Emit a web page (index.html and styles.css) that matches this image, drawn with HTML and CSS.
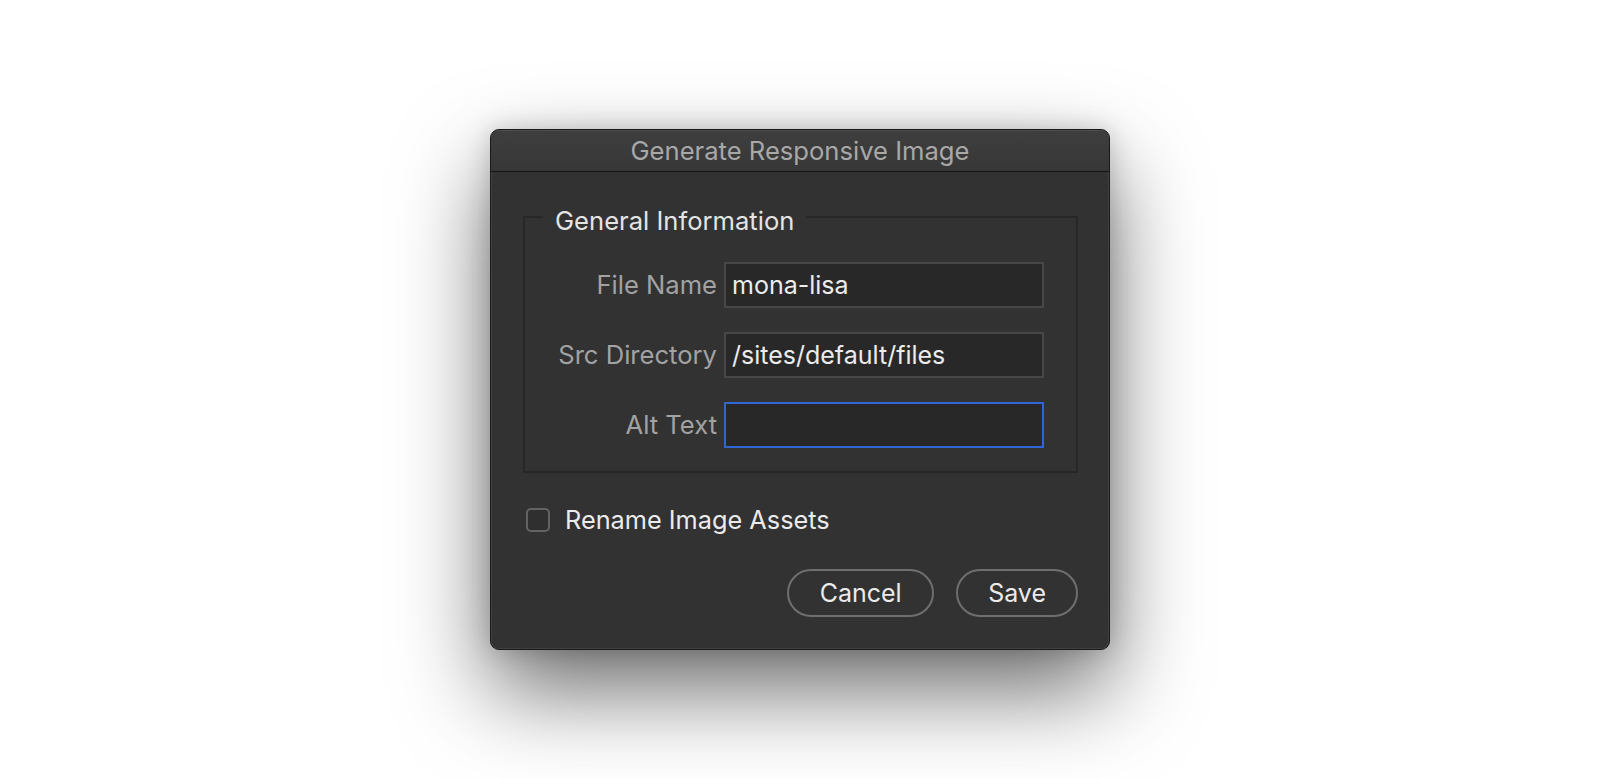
FILE: index.html
```html
<!DOCTYPE html>
<html lang="en">
<head>
<meta charset="utf-8">
<title>Generate Responsive Image</title>
<link rel="stylesheet" href="styles.css">
</head>
<body>
<div class="stage">
  <div class="dialog">
    <div class="titlebar">Generate Responsive Image</div>
    <div class="content">
      <fieldset class="group">
        <legend class="group-title">General Information</legend>
        <div class="rows">
          <label class="field-label" for="f-name">File Name</label>
          <input class="field-input" id="f-name" type="text" value="mona-lisa">
          <label class="field-label" for="f-src">Src Directory</label>
          <input class="field-input" id="f-src" type="text" value="/sites/default/files">
          <label class="field-label" for="f-alt">Alt Text</label>
          <input class="field-input is-focused" id="f-alt" type="text" value="">
        </div>
      </fieldset>
      <label class="check">
        <span class="check-box"></span>
        <span class="check-label">Rename Image Assets</span>
      </label>
      <div class="actions">
        <button class="btn btn-cancel" type="button">Cancel</button>
        <button class="btn btn-save" type="button">Save</button>
      </div>
    </div>
  </div>
</div>
</body>
</html>
```

FILE: styles.css
```css
html, body {
  margin: 0;
  padding: 0;
  background: #ffffff;
}

body {
  font-family: "Inter", "Noto Sans", "Liberation Sans", sans-serif;
  font-size: 25px;
  color: #e8e8e8;
}

.stage {
  height: 100vh;
  display: flex;
  align-items: center;
  justify-content: center;
}

.dialog {
  box-sizing: border-box;
  width: 620px;
  background: #323232;
  border: 1px solid #1a1a1a;
  border-radius: 9px;
  overflow: hidden;
  box-shadow:
    inset 0 0 0 1px rgba(255, 255, 255, 0.07),
    0 40px 90px rgba(0, 0, 0, 0.58),
    0 0 24px rgba(0, 0, 0, 0.18);
}

.titlebar {
  height: 41px;
  line-height: 41px;
  font-size: 25.6px;
  text-align: center;
  color: #a8a8a8;
  background: linear-gradient(#3e3e3e, #373737);
  border-bottom: 1px solid #141414;
  box-shadow: inset 0 1px 0 rgba(255, 255, 255, 0.08);
}

.content {
  padding: 29px 31px 32px 32px;
  display: flex;
  flex-direction: column;
}

.group {
  margin: 0;
  padding: 29px 32px 23px 18px;
  border: 2px solid #272727;
  min-width: 0;
}

.group-title {
  padding: 8px 12px 0;
  line-height: 24px;
  font-size: 25.6px;
  color: #e4e4e4;
}

.rows {
  display: grid;
  grid-template-columns: 1fr 320px;
  column-gap: 7px;
  row-gap: 24px;
  align-items: center;
}

.field-label {
  text-align: right;
  color: #a2a2a2;
  font-size: 25.6px;
}

.field-input {
  box-sizing: border-box;
  height: 46px;
  width: 320px;
  margin: 0;
  padding: 0 6px;
  font-family: inherit;
  font-size: 25px;
  color: #ececec;
  background: #282828;
  border: 2px solid #474747;
  border-radius: 0;
  outline: none;
}

.field-input.is-focused {
  border-color: #2f66d4;
}

.check {
  margin-top: 32px;
  height: 30px;
  display: flex;
  align-items: center;
  gap: 15px;
  padding-left: 3px;
}

.check-box {
  box-sizing: border-box;
  width: 24px;
  height: 24px;
  border: 2px solid #636363;
  border-radius: 5px;
  background: #2f2f2f;
}

.check-label {
  color: #ebebeb;
  font-size: 25.3px;
}

.actions {
  margin-top: 34px;
  display: flex;
  justify-content: flex-end;
  gap: 22px;
}

.btn {
  box-sizing: border-box;
  height: 48px;
  font-family: inherit;
  font-size: 25px;
  color: #ebebeb;
  background: #323232;
  border: 2px solid #6f6f6f;
  border-radius: 24px;
}

.btn-cancel {
  padding: 0 30.5px;
}

.btn-save {
  padding: 0 30px;
}
```
